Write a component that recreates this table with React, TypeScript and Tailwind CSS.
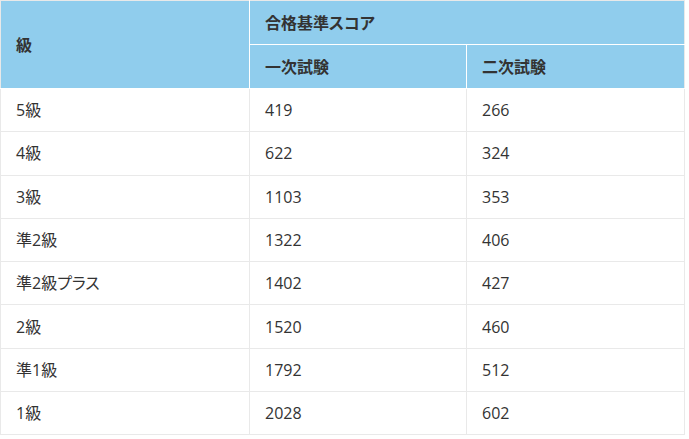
const rows = [
  { grade: "5級", first: "419", second: "266" },
  { grade: "4級", first: "622", second: "324" },
  { grade: "3級", first: "1103", second: "353" },
  { grade: "準2級", first: "1322", second: "406" },
  { grade: "準2級プラス", first: "1402", second: "427" },
  { grade: "2級", first: "1520", second: "460" },
  { grade: "準1級", first: "1792", second: "512" },
  { grade: "1級", first: "2028", second: "602" },
];

const th = "bg-[#90cded] border border-white text-left font-bold px-[15px] text-[16px]";
const td = "border border-[#e9e9e9] px-[15px] text-[16px]";

const App = () => {
  return (
    <div className="bg-white">
      <table className="w-[685px] border-collapse border border-[#e9e9e9] table-fixed text-[16px] text-[#333] font-['Open_Sans','Noto_Sans_CJK_JP',sans-serif] [font-feature-settings:'palt']">
        <colgroup>
          <col className="w-[249px]" />
          <col className="w-[217px]" />
          <col />
        </colgroup>
        <thead>
          <tr className="h-[44px]">
            <th rowSpan={2} className={`${th} border-t-[#e9e9e9] border-l-[#e9e9e9]`}>
              級
            </th>
            <th colSpan={2} className={`${th} border-t-[#e9e9e9] border-r-[#e9e9e9]`}>
              合格基準スコア
            </th>
          </tr>
          <tr className="h-[44px]">
            <th className={th}>一次試験</th>
            <th className={`${th} border-r-[#e9e9e9]`}>二次試験</th>
          </tr>
        </thead>
        <tbody>
          {rows.map((r) => (
            <tr key={r.grade} className="h-[43.3px]">
              <td className={td}>{r.grade}</td>
              <td className={td}>{r.first}</td>
              <td className={td}>{r.second}</td>
            </tr>
          ))}
        </tbody>
      </table>
    </div>
  );
};

export default App;
